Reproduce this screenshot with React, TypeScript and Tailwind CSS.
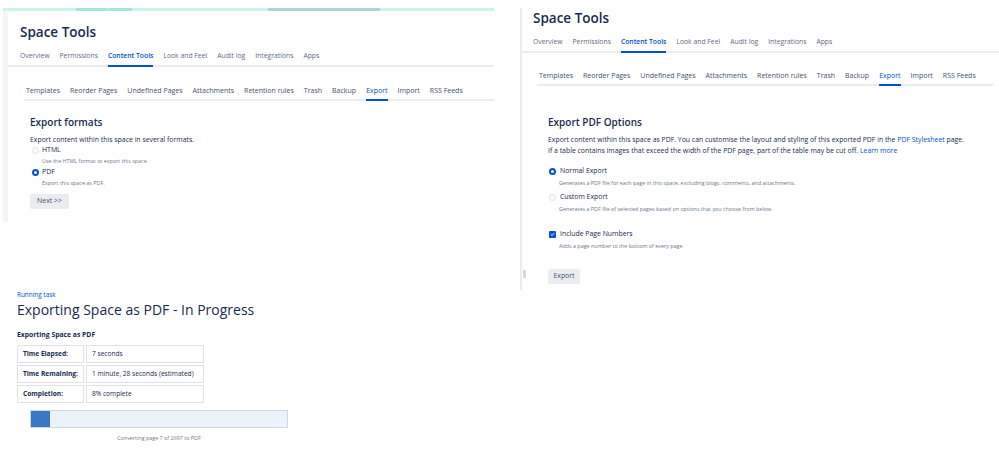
import React from "react";

const F = { fontFamily: '"Open Sans", "Noto Sans", Arial, sans-serif' };

function Tabs({ items, active, gap }: { items: string[]; active: string; gap: string }) {
  return (
    <div className={`flex ${gap}`}>
      {items.map((t) => (
        <div
          key={t}
          className={`whitespace-nowrap text-[6.8px] leading-[10px] pb-[4px] border-b-2 ${
            t === active ? "border-[#0052cc] text-[#0052cc] font-semibold" : "border-transparent text-[#5e6c84]"
          }`}
        >
          {t}
        </div>
      ))}
    </div>
  );
}

function SubTabs({ items, active }: { items: string[]; active: string }) {
  return (
    <div className="flex gap-[10px]">
      {items.map((t) => (
        <div
          key={t}
          className={`whitespace-nowrap text-[7px] leading-[10px] pb-[3px] border-b-2 ${
            t === active ? "border-[#0052cc] text-[#0052cc]" : "border-transparent text-[#42526e]"
          }`}
        >
          {t}
        </div>
      ))}
    </div>
  );
}

const TOP = ["Overview", "Permissions", "Content Tools", "Look and Feel", "Audit log", "Integrations", "Apps"];
const SUB = ["Templates", "Reorder Pages", "Undefined Pages", "Attachments", "Retention rules", "Trash", "Backup", "Export", "Import", "RSS Feeds"];

function Radio({ checked }: { checked?: boolean }) {
  return checked ? (
    <span className="w-[7px] h-[7px] rounded-full bg-[#0052cc] flex items-center justify-center shrink-0">
      <span className="w-[3px] h-[3px] rounded-full bg-white" />
    </span>
  ) : (
    <span className="w-[7px] h-[7px] rounded-full border border-[#dfe1e6] bg-[#fafbfc] shrink-0" />
  );
}

function Checkbox() {
  return (
    <span className="w-[7px] h-[7px] rounded-[1px] bg-[#0052cc] flex items-center justify-center shrink-0">
      <svg width="5" height="5" viewBox="0 0 10 10">
        <path d="M2 5.2 L4.2 7.3 L8 2.8" stroke="white" strokeWidth="1.8" fill="none" strokeLinecap="round" strokeLinejoin="round" />
      </svg>
    </span>
  );
}

function LeftTop() {
  return (
    <div className="w-[494px] h-[222px] flex flex-col">
      <div className="h-[8px]" />
      <div className="ml-[3px] h-[3px] bg-[#c9f3ec] flex">
        <div className="w-[73px]" />
        <div className="w-[32px] bg-[#a4e6da]" />
        <div className="w-[1px]" />
        <div className="w-[23px] bg-[#a4e6da]" />
        <div className="w-[136px]" />
        <div className="w-[112px] bg-[#abd2d6]" />
      </div>
      <div className="flex flex-1">
        <div className="ml-[3px] w-[5px] bg-[#f4f5f7]" />
        <div className="flex-1 flex flex-col">
          <div className="mt-[11px] ml-[12px] text-[13.5px] leading-[20px] font-semibold text-[#172b4d]">Space Tools</div>
          <div className="mt-[9px] pl-[12px] shadow-[inset_0_-2px_0_#ebecf0]">
            <Tabs items={TOP} active="Content Tools" gap="gap-[10px]" />
          </div>
          <div className="mt-[19px] ml-[16px] pl-[2px] shadow-[inset_0_-2px_0_#ebecf0]">
            <SubTabs items={SUB} active="Export" />
          </div>
          <div className="ml-[22px] flex flex-col items-start">
            <div className="mt-[14px] text-[10px] leading-[14px] font-semibold text-[#172b4d]">Export formats</div>
            <div className="mt-[5px] text-[6.9px] leading-[11px] text-[#172b4d] whitespace-nowrap">
              Export content within this space in several formats.
            </div>
            <div className="flex items-center gap-[3px] h-[11px] ml-[2px]">
              <Radio />
              <span className="text-[6.9px] text-[#172b4d]">HTML</span>
            </div>
            <div className="mt-[1px] ml-[12px] text-[5.4px] leading-[9px] text-[#6b778c]">Use the HTML format to export this space.</div>
            <div className="mt-[1px] flex items-center gap-[3px] h-[11px] ml-[2px]">
              <Radio checked />
              <span className="text-[6.9px] text-[#172b4d]">PDF</span>
            </div>
            <div className="mt-[1px] ml-[12px] text-[5.4px] leading-[9px] text-[#6b778c]">Export this space as PDF.</div>
            <div className="mt-[6px] w-[39px] h-[15px] rounded-[2px] bg-[#ebecf0] text-[6.9px] text-[#42526e] flex items-center justify-center">
              Next &gt;&gt;
            </div>
          </div>
        </div>
      </div>
    </div>
  );
}

function LeftBottom() {
  const rows = [
    ["Time Elapsed:", "7 seconds"],
    ["Time Remaining:", "1 minute, 28 seconds (estimated)"],
    ["Completion:", "8% complete"],
  ];
  return (
    <div className="ml-[17px] flex flex-col items-start">
      <div className="mt-[68px] text-[6.4px] leading-[9px] text-[#0052cc]">Running task</div>
      <div className="mt-[1px] text-[14px] leading-[20px] font-medium text-[#172b4d] whitespace-nowrap">
        Exporting Space as PDF - In Progress
      </div>
      <div className="mt-[9px] text-[6.8px] leading-[11px] font-bold text-[#172b4d]">Exporting Space as PDF</div>
      <div className="mt-[5px] grid grid-cols-[67px_118px] gap-[2px]">
        {rows.map(([a, b]) => (
          <React.Fragment key={a}>
            <div className="h-[18px] border border-[#dfe1e6] flex items-center pl-[5px] text-[6.6px] font-bold text-[#172b4d] whitespace-nowrap">
              {a}
            </div>
            <div className="h-[18px] border border-[#dfe1e6] flex items-center pl-[5px] text-[6.6px] text-[#172b4d] whitespace-nowrap">
              {b}
            </div>
          </React.Fragment>
        ))}
      </div>
      <div className="mt-[7px] ml-[13px] w-[258px] h-[18px] border border-[#c9d8ea] bg-[#ebf2fa] flex">
        <div className="w-[19px] bg-[#3b78c3]" />
      </div>
      <div className="mt-[6px] ml-[13px] w-[258px] text-center text-[5.4px] leading-[9px] text-[#6b778c]">
        Converting page 7 of 2697 to PDF
      </div>
    </div>
  );
}

function Right() {
  return (
    <div className="relative mt-[8px] h-[282px] flex-1 border-l-2 border-[#ebecf0] flex flex-col">
      <div className="absolute left-[1px] top-[262px] w-[3px] h-[8px] bg-[#d5d8de]" />
      <div className="ml-[11px] text-[13.5px] leading-[20px] font-semibold text-[#172b4d]">Space Tools</div>
      <div className="mt-[9px] pl-[11px] shadow-[inset_0_-2px_0_#ebecf0]">
        <Tabs items={TOP} active="Content Tools" gap="gap-[10px]" />
      </div>
      <div className="mt-[18px] ml-[15px] mr-[6px] pl-[2px] shadow-[inset_0_-2px_0_#ebecf0]">
        <SubTabs items={SUB} active="Export" />
      </div>
      <div className="ml-[26px] flex flex-col items-start">
        <div className="mt-[29px] text-[10px] leading-[14px] font-semibold text-[#172b4d]">Export PDF Options</div>
        <div className="mt-[5px] text-[6.9px] leading-[11px] text-[#172b4d] whitespace-nowrap">
          <div>
            Export content within this space as PDF. You can customise the layout and styling of this exported PDF in the{" "}
            <span className="text-[#0052cc]">PDF Stylesheet</span> page.
          </div>
          <div>
            If a table contains images that exceed the width of the PDF page, part of the table may be cut off.{" "}
            <span className="text-[#0052cc]">Learn more</span>
          </div>
        </div>
        <div className="mt-[10px] flex items-center gap-[4px] h-[11px] ml-[1px]">
          <Radio checked />
          <span className="text-[6.9px] text-[#172b4d]">Normal Export</span>
        </div>
        <div className="mt-[2px] ml-[11px] text-[5.4px] leading-[9px] text-[#6b778c] whitespace-nowrap">
          Generates a PDF file for each page in this space, excluding blogs, comments, and attachments.
        </div>
        <div className="mt-[4px] flex items-center gap-[4px] h-[11px] ml-[1px]">
          <Radio />
          <span className="text-[6.9px] text-[#172b4d]">Custom Export</span>
        </div>
        <div className="mt-[2px] ml-[11px] text-[5.4px] leading-[9px] text-[#6b778c] whitespace-nowrap">
          Generates a PDF file of selected pages based on options that you choose from below.
        </div>
        <div className="mt-[15px] flex items-center gap-[4px] h-[11px] ml-[1px]">
          <Checkbox />
          <span className="text-[6.9px] text-[#172b4d]">Include Page Numbers</span>
        </div>
        <div className="mt-[2px] ml-[11px] text-[5.4px] leading-[9px] text-[#6b778c] whitespace-nowrap">
          Adds a page number to the bottom of every page
        </div>
        <div className="mt-[18px] w-[32px] h-[15px] rounded-[2px] bg-[#ebecf0] text-[6.9px] text-[#42526e] flex items-center justify-center">
          Export
        </div>
      </div>
    </div>
  );
}

export default function App() {
  return (
    <div style={F} className="w-[999px] h-[452px] bg-white overflow-hidden flex">
      <div className="w-[520px] flex flex-col">
        <LeftTop />
        <LeftBottom />
      </div>
      <Right />
    </div>
  );
}
